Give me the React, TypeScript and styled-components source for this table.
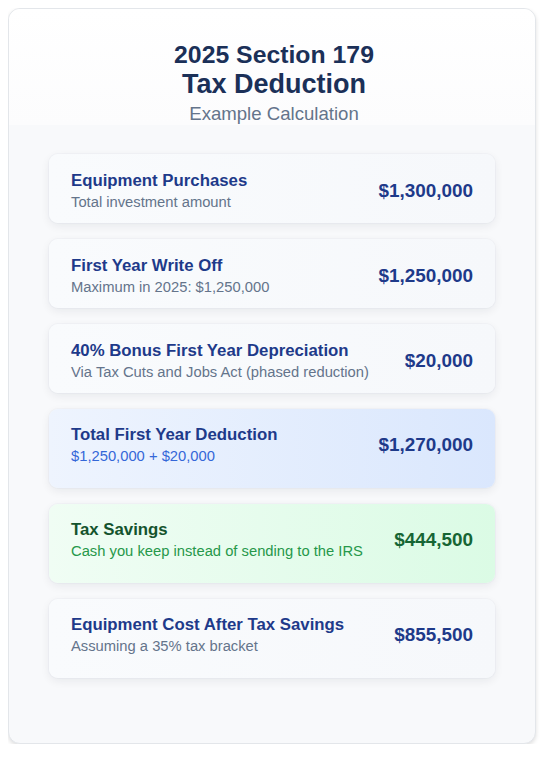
import * as React from 'react';
import styled, { createGlobalStyle, css } from 'styled-components';

const GlobalStyle = createGlobalStyle`
  body {
    margin: 8px;
    background: #ffffff;
    font-family: 'Liberation Sans', Arial, sans-serif;
  }
`;

const Card = styled.div`
  width: 528px;
  box-sizing: border-box;
  border: 1px solid #e3e6ea;
  border-radius: 12px;
  background: #f8f9fb;
  box-shadow: 0 2px 4px rgba(0, 0, 0, 0.13);
  padding-bottom: 65px;
  overflow: hidden;
`;

const Header = styled.header`
  padding: 30.5px 0 0 4px;
  text-align: center;
  background: linear-gradient(180deg, #ffffff 0%, #fcfcfd 100%);
`;

const Title = styled.h1`
  margin: 0;
  color: #1b3058;
  font-weight: 700;
`;

const TitleLine = styled.span<{ $size: number; $lh: number }>`
  display: block;
  font-size: ${(p) => p.$size}px;
  line-height: ${(p) => p.$lh}px;
`;

const Subtitle = styled.p`
  margin: 3px 0 0;
  font-size: 18.6px;
  line-height: 22px;
  color: #64748b;
`;

const List = styled.div`
  display: flex;
  flex-direction: column;
  gap: 16px;
  padding: 0 40px;
  margin-top: 29.5px;
`;

type Tone = 'plain' | 'blue' | 'green';

const tones = {
  plain: {
    bg: 'linear-gradient(90deg, #f9fbfd 0%, #f6f8fb 100%)',
    title: '#1e3a8a',
    sub: '#64748b',
    value: '#1e3a8a',
  },
  blue: {
    bg: 'linear-gradient(90deg, #eef4fe 0%, #dae7fd 100%)',
    title: '#1e3a8a',
    sub: '#3467d8',
    value: '#1e3a8a',
  },
  green: {
    bg: 'linear-gradient(90deg, #f0fdf4 0%, #dbfbe5 100%)',
    title: '#14532d',
    sub: '#26984a',
    value: '#166534',
  },
};

const Row = styled.div<{ $tone: Tone; $tall?: boolean }>`
  display: flex;
  align-items: center;
  justify-content: space-between;
  gap: 16px;
  padding: 17px 22px 12px;
  border-radius: 9px;
  background: ${(p) => tones[p.$tone].bg};
  box-shadow: 0 3px 10px rgba(15, 23, 42, 0.07), 0 0 0 1px rgba(226, 232, 240, 0.25);
  ${(p) =>
    p.$tall &&
    css`
      padding: 16px 22px 23px;
    `}
`;

const RowText = styled.div`
  display: flex;
  flex-direction: column;
  min-width: 0;
`;

const RowTitle = styled.div<{ $tone: Tone }>`
  font-size: 16.8px;
  line-height: 20px;
  font-weight: 700;
  color: ${(p) => tones[p.$tone].title};
  white-space: nowrap;
`;

const RowSub = styled.div<{ $tone: Tone }>`
  margin-top: 3px;
  font-size: 14.75px;
  line-height: 17px;
  color: ${(p) => tones[p.$tone].sub};
  white-space: nowrap;
`;

const Value = styled.div<{ $tone: Tone }>`
  font-size: 18.9px;
  font-weight: 700;
  color: ${(p) => tones[p.$tone].value};
  white-space: nowrap;
`;

type Item = {
  title: string;
  sub: string;
  value: string;
  tone: Tone;
  tall?: boolean;
};

const items: Item[] = [
  { title: 'Equipment Purchases', sub: 'Total investment amount', value: '$1,300,000', tone: 'plain' },
  { title: 'First Year Write Off', sub: 'Maximum in 2025: $1,250,000', value: '$1,250,000', tone: 'plain' },
  {
    title: '40% Bonus First Year Depreciation',
    sub: 'Via Tax Cuts and Jobs Act (phased reduction)',
    value: '$20,000',
    tone: 'plain',
  },
  { title: 'Total First Year Deduction', sub: '$1,250,000 + $20,000', value: '$1,270,000', tone: 'blue', tall: true },
  { title: 'Tax Savings', sub: 'Cash you keep instead of sending to the IRS', value: '$444,500', tone: 'green', tall: true },
  { title: 'Equipment Cost After Tax Savings', sub: 'Assuming a 35% tax bracket', value: '$855,500', tone: 'plain', tall: true },
];

export default function App() {
  return (
    <>
      <GlobalStyle />
      <Card>
        <Header>
          <Title>
            <TitleLine $size={24.8} $lh={29}>2025 Section 179</TitleLine>
            <TitleLine $size={27} $lh={31}>Tax Deduction</TitleLine>
          </Title>
          <Subtitle>Example Calculation</Subtitle>
        </Header>
        <List>
          {items.map((it) => (
            <Row key={it.title} $tone={it.tone} $tall={it.tall}>
              <RowText>
                <RowTitle $tone={it.tone}>{it.title}</RowTitle>
                <RowSub $tone={it.tone}>{it.sub}</RowSub>
              </RowText>
              <Value $tone={it.tone}>{it.value}</Value>
            </Row>
          ))}
        </List>
      </Card>
    </>
  );
}
